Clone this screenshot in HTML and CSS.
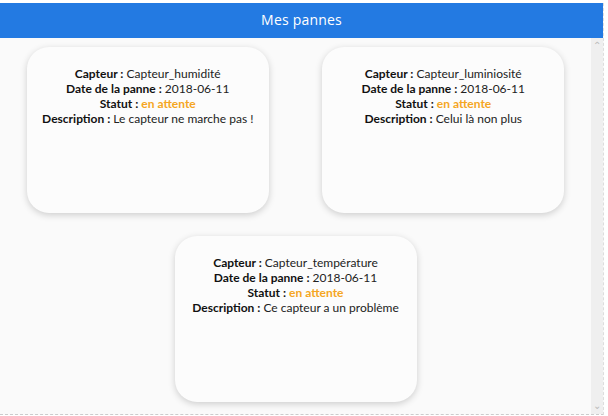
FILE: index.html
```html
<!DOCTYPE html>
<html lang="fr">
<head>
<meta charset="UTF-8">
<title>Mes pannes</title>
<link rel="stylesheet" href="styles.css">
</head>
<body>
<div class="window">
  <header class="topbar">Mes pannes</header>
  <div class="body">
    <main class="list">
      <div class="cell">
        <div class="card">
          <p><b>Capteur :</b> Capteur_humidité</p>
          <p><b>Date de la panne :</b> 2018-06-11</p>
          <p><b>Statut :</b> <span class="wait">en attente</span></p>
          <p><b>Description :</b> Le capteur ne marche pas !</p>
        </div>
      </div>
      <div class="cell">
        <div class="card">
          <p><b>Capteur :</b> Capteur_luminiosité</p>
          <p><b>Date de la panne :</b> 2018-06-11</p>
          <p><b>Statut :</b> <span class="wait">en attente</span></p>
          <p><b>Description :</b> Celui là non plus</p>
        </div>
      </div>
      <div class="cell">
        <div class="card">
          <p><b>Capteur :</b> Capteur_température</p>
          <p><b>Date de la panne :</b> 2018-06-11</p>
          <p><b>Statut :</b> <span class="wait">en attente</span></p>
          <p><b>Description :</b> Ce capteur a un problème</p>
        </div>
      </div>
    </main>
    <div class="scroll">
      <span class="arrow">&#8963;</span>
      <span class="arrow">&#8964;</span>
    </div>
  </div>
</div>
</body>
</html>
```

FILE: styles.css
```css
*{margin:0;padding:0;box-sizing:border-box}
body{background:#fff;font-family:'Lato','Liberation Sans',sans-serif}
.window{width:604px;height:412px;margin-top:3px;display:flex;flex-direction:column;border-right:1px dashed #ddd;border-bottom:1px dashed #ccc;background:#fafafa}
.topbar{height:35px;background:#237ae2;color:#fff;text-align:center;font-family:'Open Sans','Noto Sans',sans-serif;font-size:14px;font-weight:400;line-height:34px;letter-spacing:0.2px}
.body{flex:1;display:flex;min-height:0}
.list{flex:1;display:flex;flex-wrap:wrap;justify-content:center;padding-top:9px;row-gap:23px;align-content:flex-start}
.cell{width:50%;display:flex;justify-content:center}
.card{width:242px;height:166px;background:#fcfcfc;border-radius:22px;box-shadow:0 2px 7px rgba(0,0,0,0.18);padding-top:19px;text-align:center;font-size:12px;line-height:15px;color:#222}
.card b{font-weight:700;color:#111}
.wait{color:#f5a623;font-weight:700}
.scroll{width:12px;background:#efefef;display:flex;flex-direction:column;justify-content:space-between;align-items:center;color:#bbb;font-size:10px;padding:2px 0 4px}
.arrow{line-height:10px}
```
